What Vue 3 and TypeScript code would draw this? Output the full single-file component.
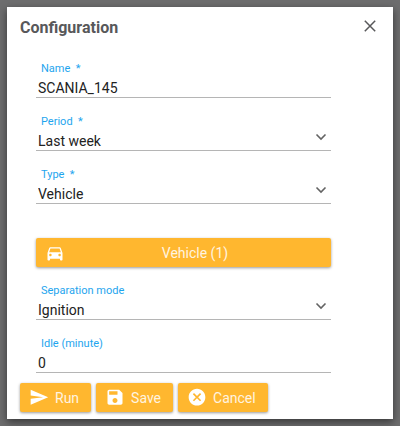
<script setup lang="ts">
import { reactive, ref } from 'vue'

interface ReportConfig {
  name: string
  period: string
  type: string
  separation: string
  idle: string
}

const open = ref(true)
const vehicleCount = ref(1)
const config = reactive<ReportConfig>({
  name: 'SCANIA_145',
  period: 'Last week',
  type: 'Vehicle',
  separation: 'Ignition',
  idle: '0',
})
</script>

<template>
  <div class="backdrop">
    <form v-if="open" class="dialog" role="dialog" aria-labelledby="dialog-title" @submit.prevent>
      <header class="header">
        <h1 id="dialog-title" class="title">Configuration</h1>
        <button type="button" class="close" aria-label="Close" @click="open = false">
          <svg viewBox="0 0 12 12" width="12" height="12"><path d="M.8.8l10.4 10.4M11.2.8L.8 11.2" /></svg>
        </button>
      </header>

      <div class="fields">
        <div class="field">
          <label for="name">Name &nbsp;*</label>
          <input id="name" v-model="config.name" class="control" type="text" />
        </div>
        <div class="field">
          <label for="period">Period &nbsp;*</label>
          <select id="period" v-model="config.period" class="control">
            <option>Last week</option>
          </select>
          <svg class="chevron" viewBox="0 0 10 6" width="10" height="6"><path d="M.5.5L5 5 9.5.5" /></svg>
        </div>
        <div class="field">
          <label for="type">Type &nbsp;*</label>
          <select id="type" v-model="config.type" class="control">
            <option>Vehicle</option>
          </select>
          <svg class="chevron" viewBox="0 0 10 6" width="10" height="6"><path d="M.5.5L5 5 9.5.5" /></svg>
        </div>

        <button type="button" class="btn wide">
          <svg class="icon" viewBox="0 0 24 24" width="20" height="20">
            <path d="M18.92 6.01C18.72 5.42 18.16 5 17.5 5h-11c-.66 0-1.21.42-1.42 1.01L3 12v8c0 .55.45 1 1 1h1c.55 0 1-.45 1-1v-1h12v1c0 .55.45 1 1 1h1c.55 0 1-.45 1-1v-8l-2.08-5.99zM6.5 16c-.83 0-1.5-.67-1.5-1.5S5.67 13 6.5 13s1.5.67 1.5 1.5S7.33 16 6.5 16zm11 0c-.83 0-1.5-.67-1.5-1.5s.67-1.5 1.5-1.5 1.5.67 1.5 1.5-.67 1.5-1.5 1.5zM5 11l1.5-4.5h11L19 11H5z" />
          </svg>
          <span class="wide-text">Vehicle ({{ vehicleCount }})</span>
        </button>

        <div class="field">
          <label for="separation">Separation mode</label>
          <select id="separation" v-model="config.separation" class="control">
            <option>Ignition</option>
          </select>
          <svg class="chevron" viewBox="0 0 10 6" width="10" height="6"><path d="M.5.5L5 5 9.5.5" /></svg>
        </div>
        <div class="field">
          <label for="idle">Idle (minute)</label>
          <input id="idle" v-model="config.idle" class="control" type="text" inputmode="numeric" />
        </div>
      </div>

      <footer class="actions">
        <button type="submit" class="btn">
          <svg class="icon" viewBox="0 0 24 24" width="20" height="20"><path d="M2.01 20L23 11 2.01 2 2 9l15 2-15 2z" /></svg>
          <span>Run</span>
        </button>
        <button type="button" class="btn">
          <svg class="icon" viewBox="0 0 24 24" width="20" height="20"><path d="M17 2H5c-1.11 0-2 .9-2 2v14c0 1.1.89 2 2 2h14c1.1 0 2-.9 2-2V6l-4-4zm-5 16c-1.66 0-3-1.34-3-3s1.34-3 3-3 3 1.34 3 3-1.34 3-3 3zm3-10H5V4h10v4z" /></svg>
          <span>Save</span>
        </button>
        <button type="button" class="btn" @click="open = false">
          <svg class="icon" viewBox="0 0 24 24" width="20" height="20"><path d="M12 1C6.47 1 2 5.47 2 11s4.47 10 10 10 10-4.47 10-10S17.53 1 12 1zm5 13.59L15.59 16 12 12.41 8.41 16 7 14.59 10.59 11 7 7.41 8.41 6 12 9.59 15.59 6 17 7.41 13.41 11 17 14.59z" /></svg>
          <span>Cancel</span>
        </button>
      </footer>
    </form>
  </div>
</template>

<style>
body {
  background: #6d6d6e;
}
</style>

<style scoped>
.backdrop {
  box-sizing: border-box;
  min-height: 100vh;
  padding: 7px;
  font-family: Roboto, "Liberation Sans", sans-serif;
}
.dialog {
  background: #fff;
  box-shadow: 0 3px 8px rgba(0, 0, 0, 0.5);
  padding: 0 13px 7px;
}
.header {
  display: flex;
  align-items: center;
  justify-content: space-between;
  height: 38px;
}
.title {
  margin: 4px 0 0;
  font-size: 16px;
  line-height: 20px;
  font-weight: 700;
  color: #58585a;
}
.close {
  display: flex;
  padding: 4px;
  border: 0;
  background: none;
  cursor: pointer;
}
.close path {
  fill: none;
  stroke: #58585a;
  stroke-width: 1.5;
}
.fields {
  padding: 0 49px 0 16px;
}
.field {
  display: grid;
  padding-top: 15px;
  border-bottom: 1px solid #b5b5b5;
}
.field label {
  grid-area: 1 / 1;
  padding-left: 5px;
  font-size: 11px;
  line-height: 17px;
  color: #1ea5ee;
}
.control {
  grid-area: 2 / 1;
  box-sizing: border-box;
  width: 100%;
  height: 17px;
  margin: 3px 0 0;
  padding: 0 2px;
  border: 0;
  border-radius: 0;
  outline: 0;
  background: none;
  appearance: none;
  font: 14px/17px Roboto, "Liberation Sans", sans-serif;
  color: #222;
}
.chevron {
  grid-area: 2 / 1;
  justify-self: end;
  align-self: start;
  margin: 4px 5px 0 0;
  overflow: visible;
  pointer-events: none;
}
.chevron path {
  fill: none;
  stroke: #636363;
  stroke-width: 1.6;
}
.btn {
  display: flex;
  align-items: center;
  gap: 6px;
  height: 29px;
  padding: 0 12px 0 9px;
  border: 0;
  border-radius: 2px;
  background: #ffb72f;
  box-shadow: 0 1px 3px rgba(0, 0, 0, 0.4);
  color: #fff;
  font: 14px/20px Roboto, "Liberation Sans", sans-serif;
  cursor: pointer;
}
.btn span {
  opacity: 0.85;
}
.icon {
  fill: #fff;
}
.wide {
  width: 100%;
  margin-top: 34px;
}
.wide-text {
  flex: 1;
}
.actions {
  display: flex;
  flex-wrap: wrap;
  gap: 5px;
  padding-top: 10px;
}
</style>
